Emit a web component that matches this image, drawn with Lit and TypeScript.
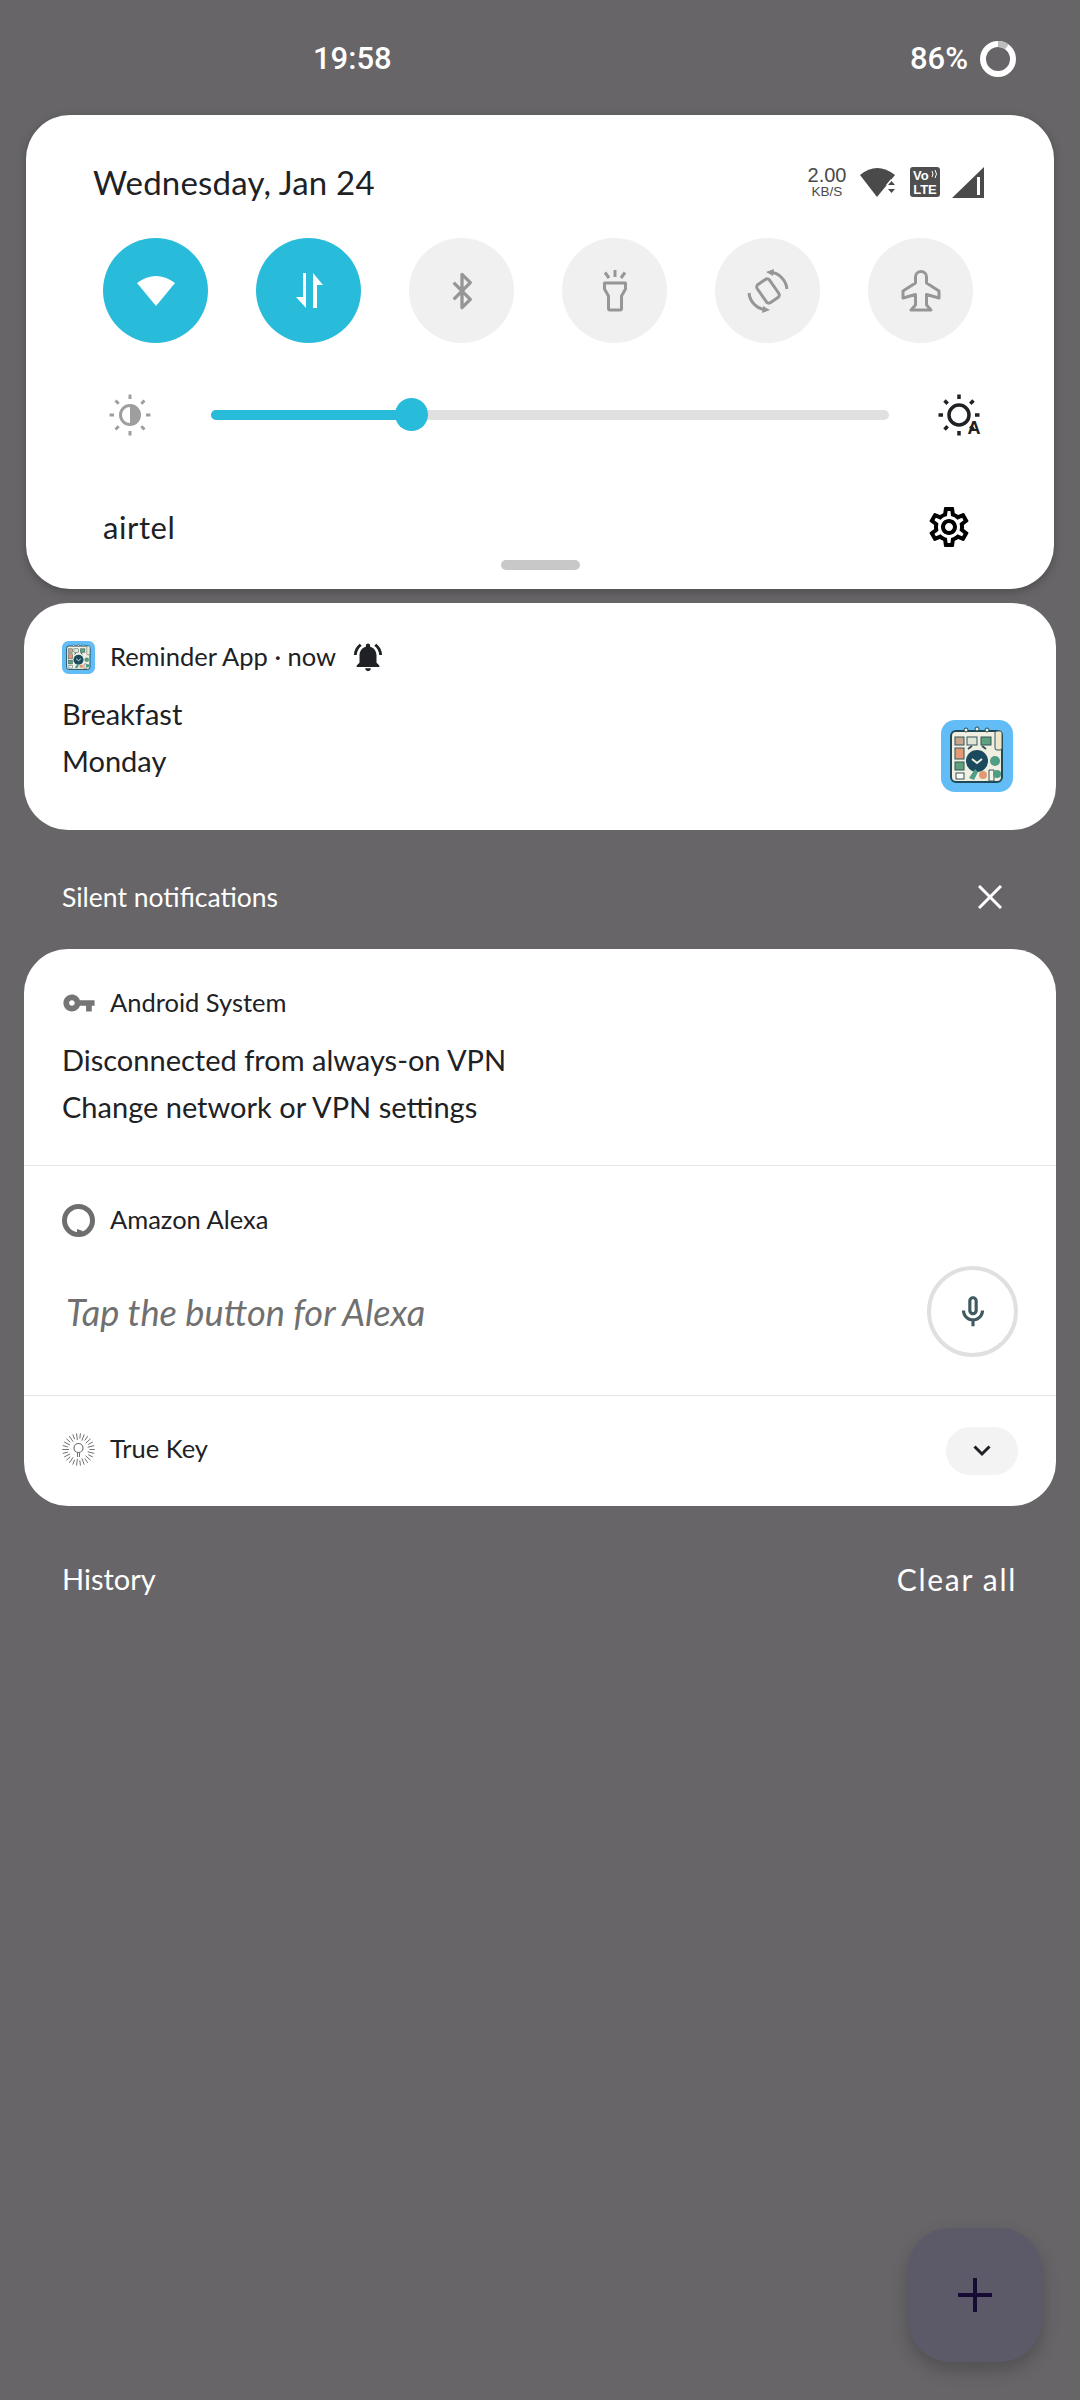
import { LitElement, html, css, svg } from "lit";
import { customElement } from "lit/decorators.js";

const GEAR =
  "M19.43 12.98c.04-.32.07-.64.07-.98 0-.34-.03-.66-.07-.98l2.11-1.65c.19-.15.24-.42.12-.64l-2-3.46c-.09-.16-.26-.25-.44-.25-.06 0-.12.01-.17.03l-2.49 1c-.52-.4-1.08-.73-1.69-.98l-.38-2.65C14.46 2.18 14.25 2 14 2h-4c-.25 0-.46.18-.49.42l-.38 2.65c-.61.25-1.17.59-1.69.98l-2.49-1c-.06-.02-.12-.03-.18-.03-.17 0-.34.09-.43.25l-2 3.46c-.13.22-.07.49.12.64l2.11 1.65c-.04.32-.07.65-.07.98 0 .33.03.66.07.98l-2.11 1.65c-.19.15-.24.42-.12.64l2 3.46c.09.16.26.25.44.25.06 0 .12-.01.17-.03l2.49-1c.52.4 1.08.73 1.69.98l.38 2.65c.03.24.24.42.49.42h4c.25 0 .46-.18.49-.42l.38-2.65c.61-.25 1.17-.59 1.69-.98l2.49 1c.06.02.12.03.18.03.17 0 .34-.09.43-.25l2-3.46c.12-.22.07-.49-.12-.64l-2.11-1.65zm-1.98-1.71c.04.31.05.52.05.73 0 .21-.02.43-.05.73l-.14 1.13.89.7 1.08.84-.7 1.21-1.27-.51-1.04-.42-.9.68c-.43.32-.84.56-1.25.73l-1.06.43-.16 1.13-.2 1.35h-1.4l-.19-1.35-.16-1.13-1.06-.43c-.43-.18-.83-.41-1.23-.71l-.91-.7-1.06.43-1.27.51-.7-1.21 1.08-.84.89-.7-.14-1.13c-.03-.31-.05-.54-.05-.74s.02-.43.05-.73l.14-1.13-.89-.7-1.08-.84.7-1.21 1.27.51 1.04.42.9-.68c.43-.32.84-.56 1.25-.73l1.06-.43.16-1.13.2-1.35h1.39l.19 1.35.16 1.13 1.06.43c.43.18.83.41 1.23.71l.91.7 1.06-.43 1.27-.51.7 1.21-1.07.85-.89.7.14 1.13zM12 8c-2.21 0-4 1.79-4 4s1.79 4 4 4 4-1.79 4-4-1.79-4-4-4zm0 6c-1.1 0-2-.9-2-2s.9-2 2-2 2 .9 2 2-.9 2-2 2z";
const BELL =
  "M7.58 4.08L6.15 2.65C3.75 4.48 2.17 7.3 2.03 10.5h2c.15-2.65 1.51-4.97 3.55-6.42zm12.39 6.42h2c-.15-3.2-1.73-6.02-4.12-7.85l-1.42 1.43c2.02 1.45 3.39 3.77 3.54 6.42zM18 11c0-3.07-1.64-5.64-4.5-6.32V4c0-.83-.67-1.5-1.5-1.5s-1.5.67-1.5 1.5v.68C7.63 5.36 6 7.92 6 11v5l-2 2v1h16v-1l-2-2v-5zm-6 11c.14 0 .27-.01.4-.04.65-.14 1.18-.58 1.44-1.18.1-.24.15-.5.15-.78h-4c.01 1.1.9 2 2.01 2z";
const KEY =
  "M12.65 10C11.83 7.67 9.61 6 7 6c-3.31 0-6 2.69-6 6s2.69 6 6 6c2.61 0 4.83-1.67 5.65-4H17v4h4v-4h2v-4H12.65zM7 14c-1.1 0-2-.9-2-2s.9-2 2-2 2 .9 2 2-.9 2-2 2z";
const MIC =
  "M12 14c1.66 0 3-1.34 3-3V5c0-1.66-1.34-3-3-3S9 3.34 9 5v6c0 1.66 1.34 3 3 3zm-1-9c0-.55.45-1 1-1s1 .45 1 1v6c0 .55-.45 1-1 1s-1-.45-1-1V5zm6 6c0 2.76-2.24 5-5 5s-5-2.24-5-5H5c0 3.53 2.61 6.43 6 6.92V21h2v-3.08c3.39-.49 6-3.39 6-6.92h-2z";

const sunRays = (cx: number, cy: number, r1: number, r2: number, w: number) =>
  [0, 45, 90, 135, 180, 225, 270, 315].map((a) => {
    const t = (a * Math.PI) / 180;
    return svg`<line x1=${cx + r1 * Math.cos(t)} y1=${cy + r1 * Math.sin(t)} x2=${cx + r2 * Math.cos(t)} y2=${cy + r2 * Math.sin(t)} stroke-width=${w} />`;
  });

const keyRays = Array.from({ length: 26 }, (_, i) => {
  const t = (i / 26) * Math.PI * 2;
  const r1 = i % 2 ? 9.5 : 11;
  return svg`<line x1=${16.5 + r1 * Math.cos(t)} y1=${16.5 + r1 * Math.sin(t)} x2=${16.5 + 16.2 * Math.cos(t)} y2=${16.5 + 16.2 * Math.sin(t)} />`;
});

// the app artwork, redrawn as shapes
const appIcon = (size: number) => html`<svg width=${size} height=${size} viewBox="0 0 72 72">
  <rect width="72" height="72" rx="14" fill="#62bdf6" />
  <rect x="10" y="11" width="51" height="51" rx="5" fill="#f1efe2" stroke="#1f4a55" stroke-width="2" />
  <circle cx="25" cy="10" r="2" fill="#f1efe2" stroke="#1f4a55" />
  <circle cx="36" cy="9" r="2" fill="#f1efe2" stroke="#1f4a55" />
  <circle cx="46" cy="10" r="2" fill="#f1efe2" stroke="#1f4a55" />
  <rect x="14" y="17" width="9" height="8" fill="#c9a58b" stroke="#33545a" />
  <rect x="26" y="17" width="10" height="8" fill="#dfe4d6" stroke="#33545a" />
  <rect x="40" y="17" width="10" height="8" fill="#5fa07e" stroke="#33545a" />
  <rect x="14" y="28" width="9" height="11" fill="#e39a72" stroke="#33545a" />
  <rect x="14" y="42" width="9" height="8" fill="#5fa07e" stroke="#33545a" />
  <rect x="15" y="53" width="8" height="6" fill="#f8f8f4" stroke="#33545a" />
  <rect x="54" y="11" width="7" height="19" rx="2" fill="#efe7cc" stroke="#33545a" />
  <circle cx="36" cy="41" r="11" fill="#1b4a5f" />
  <path d="M31 39l5 4 5-4" fill="none" stroke="#f1efe2" stroke-width="2" />
  <path d="M27 29l4-3M45 29l-4-3" stroke="#33545a" stroke-width="2" />
  <circle cx="54" cy="41" r="5" fill="#4f9d84" />
  <path d="M48 50h5v11h-5z" fill="#f5f3e6" stroke="#33545a" />
  <path d="M28 58l6-9 3 3-4 8z" fill="#4f9d84" />
  <circle cx="42" cy="55" r="4" fill="#e39a72" />
  <circle cx="56" cy="54" r="4" fill="#4f9d84" />
</svg>`;

@customElement("app-root")
export class AppRoot extends LitElement {
  static styles = css`
    :host {
      display: block;
      position: relative;
      width: 1080px;
      height: 2400px;
      overflow: hidden;
      background: #676568;
      color: #202124;
      font-family: Lato, "Noto Sans", sans-serif;
    }
    svg {
      display: block;
      flex: none;
    }

    .status_bar {
      height: 115px;
      box-sizing: border-box;
      padding-top: 38px;
      display: flex;
      align-items: flex-start;
      color: #fff;
      font-family: Roboto, sans-serif;
      font-weight: 500;
      font-size: 31px;
      line-height: 42px;
    }
    .status_time {
      margin-left: 313px;
    }
    .status_batt {
      margin-left: auto;
      margin-right: 64px;
      display: flex;
      align-items: center;
      gap: 12px;
    }

    .qs_panel {
      margin-left: 26px;
      width: 1028px;
      height: 474px;
      box-sizing: border-box;
      padding-top: 45px;
      background: #fff;
      border-radius: 44px;
      box-shadow: 0 3px 10px rgba(0, 0, 0, 0.25);
    }
    .qs_head {
      height: 44px;
      display: flex;
      align-items: center;
      padding: 0 70px 0 67px;
    }
    .qs_date {
      font-size: 33px;
      letter-spacing: 0.2px;
    }
    .qs_icons {
      margin-left: auto;
      display: flex;
      align-items: center;
    }
    .speed {
      width: 44px;
      margin-right: 10px;
      text-align: center;
      color: #4a4a4a;
      font-family: "Liberation Sans", sans-serif;
    }
    .speed_val {
      font-size: 20px;
      line-height: 19px;
    }
    .speed_unit {
      font-size: 13.5px;
      line-height: 14px;
    }
    .volte {
      margin-left: 13px;
    }
    .signal {
      margin-left: 12px;
    }

    .toggles {
      margin-top: 34px;
      padding-left: 77px;
      display: flex;
      gap: 48px;
    }
    .toggle {
      width: 105px;
      height: 105px;
      border-radius: 50%;
      background: #f0f0f0;
      display: flex;
      align-items: center;
      justify-content: center;
      color: #969696;
    }
    .toggle.on {
      background: #29bbda;
      color: #fff;
    }

    .brightness {
      margin-top: 52px;
      height: 40px;
      padding: 0 71px 0 80px;
      display: flex;
      align-items: center;
    }
    .bright_icon {
      width: 48px;
      display: flex;
      justify-content: center;
    }
    .track {
      flex: 1;
      margin: 0 46px 0 57px;
      height: 10px;
      border-radius: 5px;
      background: #e0e0e0;
      position: relative;
    }
    .track_fill {
      height: 100%;
      border-radius: 5px;
      background: #29bbda;
    }
    .track_thumb {
      position: absolute;
      top: -12px;
      width: 33px;
      height: 33px;
      margin-left: -16.5px;
      border-radius: 50%;
      background: #29bbda;
    }

    .qs_foot {
      margin-top: 67px;
      height: 50px;
      padding: 0 81px 0 77px;
      display: flex;
      align-items: center;
      justify-content: space-between;
      font-size: 31px;
      letter-spacing: 0.6px;
    }
    .handle {
      margin: 8px auto 0;
      width: 79px;
      height: 10px;
      border-radius: 5px;
      background: #c8c8c8;
    }

    .card {
      margin-left: 24px;
      width: 1032px;
      background: #fff;
      border-radius: 44px;
      overflow: hidden;
    }
    .card.reminder {
      margin-top: 14px;
      height: 227px;
    }
    .group + .group {
      border-top: 1px solid #e6e6e6;
    }
    .group {
      box-sizing: border-box;
      padding: 38px 38px 0 38px;
    }
    .group.vpn {
      height: 216px;
    }
    .group.alexa {
      height: 230px;
    }
    .group.truekey {
      height: 111px;
      padding-top: 0;
      display: flex;
      align-items: center;
      justify-content: space-between;
    }
    .group.truekey .app_row {
      margin-bottom: 3px;
    }
    .app_row {
      height: 32px;
      display: flex;
      align-items: center;
      font-size: 25.5px;
    }
    .app_slot {
      width: 48px;
      flex: none;
    }
    .app_name {
      white-space: pre;
      margin-top: -3px;
    }
    .bell {
      margin-left: 15px;
    }
    .body_row {
      display: flex;
      justify-content: space-between;
    }
    .lines {
      margin-top: 17px;
      font-size: 29px;
      line-height: 47px;
      white-space: nowrap;
    }
    .big_icon {
      margin: 47px 5px 0 0;
    }

    .section_head {
      height: 119px;
      box-sizing: border-box;
      padding: 15px 78px 0 62px;
      display: flex;
      align-items: center;
      justify-content: space-between;
      color: #fff;
      font-size: 26.5px;
    }

    .alexa_row {
      margin-top: 30px;
      display: flex;
      align-items: center;
      justify-content: space-between;
    }
    .alexa_hint {
      margin-left: 4px;
      font-size: 36.2px;
      font-style: italic;
      color: #707070;
    }
    .mic_btn {
      width: 91px;
      height: 91px;
      box-sizing: border-box;
      border: 4px solid #e0e0e0;
      border-radius: 50%;
      display: flex;
      align-items: center;
      justify-content: center;
      color: #3f5a60;
    }
    .expand {
      width: 72px;
      height: 48px;
      border-radius: 24px;
      background: #f3f3f3;
      display: flex;
      align-items: center;
      justify-content: center;
    }

    .footer_row {
      padding: 53px 63px 0 62px;
      display: flex;
      justify-content: space-between;
      color: #fff;
      font-size: 29px;
      line-height: 40px;
    }
    .clear_all {
      font-size: 30px;
      letter-spacing: 1.7px;
    }

    .fab {
      position: absolute;
      left: 908px;
      top: 2228px;
      width: 134px;
      height: 134px;
      border-radius: 42px;
      background: #5c5a68;
      box-shadow: 0 8px 18px rgba(0, 0, 0, 0.22);
      display: flex;
      align-items: center;
      justify-content: center;
    }
  `;

  render() {
    return html`
      <div class="status_bar">
        <span class="status_time">19:58</span>
        <div class="status_batt">
          <span>86%</span>
          <svg width="36" height="36" viewBox="0 0 36 36" fill="none" stroke-width="6">
            <circle cx="18" cy="18" r="15" stroke="#fff" />
            <path d="M18 3A15 15 0 0 1 26.800 5.900" stroke="#bdbcbd" />
          </svg>
        </div>
      </div>

      <div class="qs_panel">
        <div class="qs_head">
          <span class="qs_date">Wednesday, Jan 24</span>
          <div class="qs_icons">
            <div class="speed">
              <div class="speed_val">2.00</div>
              <div class="speed_unit">KB/S</div>
            </div>
            <svg width="38" height="30" viewBox="0 0 38 30">
              <path d="M1 8Q18-6 36 8L18 30Z" fill="#4a4a4a" />
              <path d="M27 18l5-6 5 6zM27 21h10l-5 6z" fill="#fff" />
              <path d="M29 18l3.500-4 3.500 4zM29 22h7l-3.500 4z" fill="#4a4a4a" />
            </svg>
            <svg class="volte" width="30" height="30" viewBox="0 0 30 30">
              <rect width="30" height="30" rx="3" fill="#4f4f4f" />
              <text x="3" y="13" fill="#fff" font-family="Liberation Sans" font-weight="700" font-size="13">Vo</text>
              <path d="M22 4q2 3 0 6M25 3q3 4 0 8" fill="none" stroke="#fff" stroke-width="1" />
              <text x="15" y="27" text-anchor="middle" fill="#fff" font-family="Liberation Sans" font-weight="700" font-size="13">LTE</text>
            </svg>
            <svg class="signal" width="32" height="31" viewBox="0 0 32 31">
              <path d="M32 0V31H0Z" fill="#4a4a4a" />
              <path d="M25 10h3v18h-3z" fill="#fff" />
            </svg>
          </div>
        </div>

        <div class="toggles">
          <div class="toggle on">
            <svg width="38" height="31" viewBox="0 0 38 31"><path d="M0 8Q19-6 38 8L19 31Z" fill="currentColor" /></svg>
          </div>
          <div class="toggle on">
            <svg width="34" height="40" viewBox="0 0 34 40" fill="currentColor">
              <path d="M11 2h3v35L4 26h7z" />
              <path d="M21 2l10 12h-6v23h-4z" />
            </svg>
          </div>
          <div class="toggle">
            <svg width="40" height="40" viewBox="0 0 24 24" fill="none" stroke="currentColor" stroke-width="2" stroke-linejoin="round">
              <path d="M7 7l10 10-5 5V2l5 5L7 17" />
            </svg>
          </div>
          <div class="toggle">
            <svg width="34" height="44" viewBox="0 0 34 44" fill="none" stroke="currentColor" stroke-width="3">
              <path d="M6.500 14H27.500V20L23.500 27V39.500a1.500 1.500 0 0 1-1.500 1.500H12A1.500 1.500 0 0 1 10.500 39.500V27L6.500 20Z" stroke-linejoin="round" />
              <path d="M17 1V8M7 3.500L11 9M27 3.500L23 9" />
            </svg>
          </div>
          <div class="toggle">
            <svg width="44" height="44" viewBox="0 0 44 44" fill="none" stroke="currentColor" stroke-width="3">
              <rect x="14.500" y="11" width="15" height="22" rx="3" transform="rotate(-35 22 22)" />
              <path d="M24 3A19 19 0 0 1 41 20" />
              <path d="M20 41A19 19 0 0 1 3 24" />
              <path d="M20 3l8-3-1 7zM24 41l-8 3 1-7z" fill="currentColor" stroke="none" />
            </svg>
          </div>
          <div class="toggle">
            <svg width="44" height="44" viewBox="0 0 44 44" fill="none" stroke="currentColor" stroke-width="3" stroke-linejoin="round">
              <path d="M16.500 8a5.500 5.500 0 0 1 11 0V14L40 22V29L27.500 25.500V36L32 41H12L16.500 36V25.500L4 29V22L16.500 14Z" />
            </svg>
          </div>
        </div>

        <div class="brightness">
          <div class="bright_icon">
            <svg width="42" height="42" viewBox="0 0 42 42" fill="none" stroke="#9e9e9e">
              ${sunRays(21, 21, 16, 20.5, 3)}
              <circle cx="21" cy="21" r="9.500" stroke-width="3" />
              <path d="M21 11.500a9.500 9.500 0 0 1 0 19z" fill="#9e9e9e" stroke="none" />
            </svg>
          </div>
          <div class="track">
            <div class="track_fill" style="width:${(200.5 / 678) * 100}%"></div>
            <div class="track_thumb" style="left:${(200.5 / 678) * 100}%"></div>
          </div>
          <div class="bright_icon">
            <svg width="48" height="52" viewBox="0 0 48 52" fill="none" stroke="#202124">
              ${sunRays(24, 26, 16, 20.5, 3.5)}
              <circle cx="24" cy="26" r="10" stroke-width="3.500" />
              <text x="39" y="45" text-anchor="middle" fill="#202124" stroke="none" font-family="Liberation Sans" font-weight="700" font-size="18">A</text>
            </svg>
          </div>
        </div>

        <div class="qs_foot">
          <span>airtel</span>
          <svg width="48" height="48" viewBox="0 0 24 24" fill="#000"><path d=${GEAR} /></svg>
        </div>
        <div class="handle"></div>
      </div>

      <div class="card reminder">
        <div class="group">
          <div class="app_row">
            <div class="app_slot">${appIcon(33)}</div>
            <span class="app_name">Reminder App · now</span>
            <svg class="bell" width="34" height="34" viewBox="0 0 24 24" fill="#202124"><path d=${BELL} /></svg>
          </div>
          <div class="body_row">
            <div class="lines">Breakfast<br />Monday</div>
            <div class="big_icon">${appIcon(72)}</div>
          </div>
        </div>
      </div>

      <div class="section_head">
        <span>Silent notifications</span>
        <svg width="24" height="24" viewBox="0 0 24 24" stroke="#fff" stroke-width="3"><path d="M1 1L23 23M23 1L1 23" /></svg>
      </div>

      <div class="card">
        <div class="group vpn">
          <div class="app_row">
            <div class="app_slot"><svg width="34" height="34" viewBox="0 0 24 24" fill="#757575"><path d=${KEY} /></svg></div>
            <span class="app_name">Android System</span>
          </div>
          <div class="lines">Disconnected from always-on VPN<br />Change network or VPN settings</div>
        </div>
        <div class="group alexa">
          <div class="app_row">
            <div class="app_slot">
              <svg width="33" height="33" viewBox="0 0 33 33">
                <circle cx="16.500" cy="16.500" r="14" fill="none" stroke="#6e6e70" stroke-width="5" />
                <path d="M15 25L21 27L15 31Z" fill="#6e6e70" />
              </svg>
            </div>
            <span class="app_name">Amazon Alexa</span>
          </div>
          <div class="alexa_row">
            <span class="alexa_hint">Tap the button for Alexa</span>
            <div class="mic_btn"><svg width="38" height="38" viewBox="0 0 24 24" fill="currentColor"><path d=${MIC} /></svg></div>
          </div>
        </div>
        <div class="group truekey">
          <div class="app_row">
            <div class="app_slot">
              <svg width="33" height="33" viewBox="0 0 33 33" fill="none" stroke="#707070" stroke-width="1">
                ${keyRays}
                <circle cx="16.500" cy="15" r="4.500" stroke-width="1.200" />
                <path d="M15.500 19.500V24M17.500 19.500V24" />
              </svg>
            </div>
            <span class="app_name">True Key</span>
          </div>
          <div class="expand">
            <svg width="18" height="12" viewBox="0 0 18 12" fill="none" stroke="#202124" stroke-width="3"><path d="M1.500 1.500L9 9L16.500 1.500" /></svg>
          </div>
        </div>
      </div>

      <div class="footer_row">
        <span>History</span>
        <span class="clear_all">Clear all</span>
      </div>

      <div class="fab">
        <svg width="34" height="34" viewBox="0 0 34 34" fill="#170a33"><path d="M15 0h4v15h15v4H19v15h-4V19H0v-4h15z" /></svg>
      </div>
    `;
  }
}
